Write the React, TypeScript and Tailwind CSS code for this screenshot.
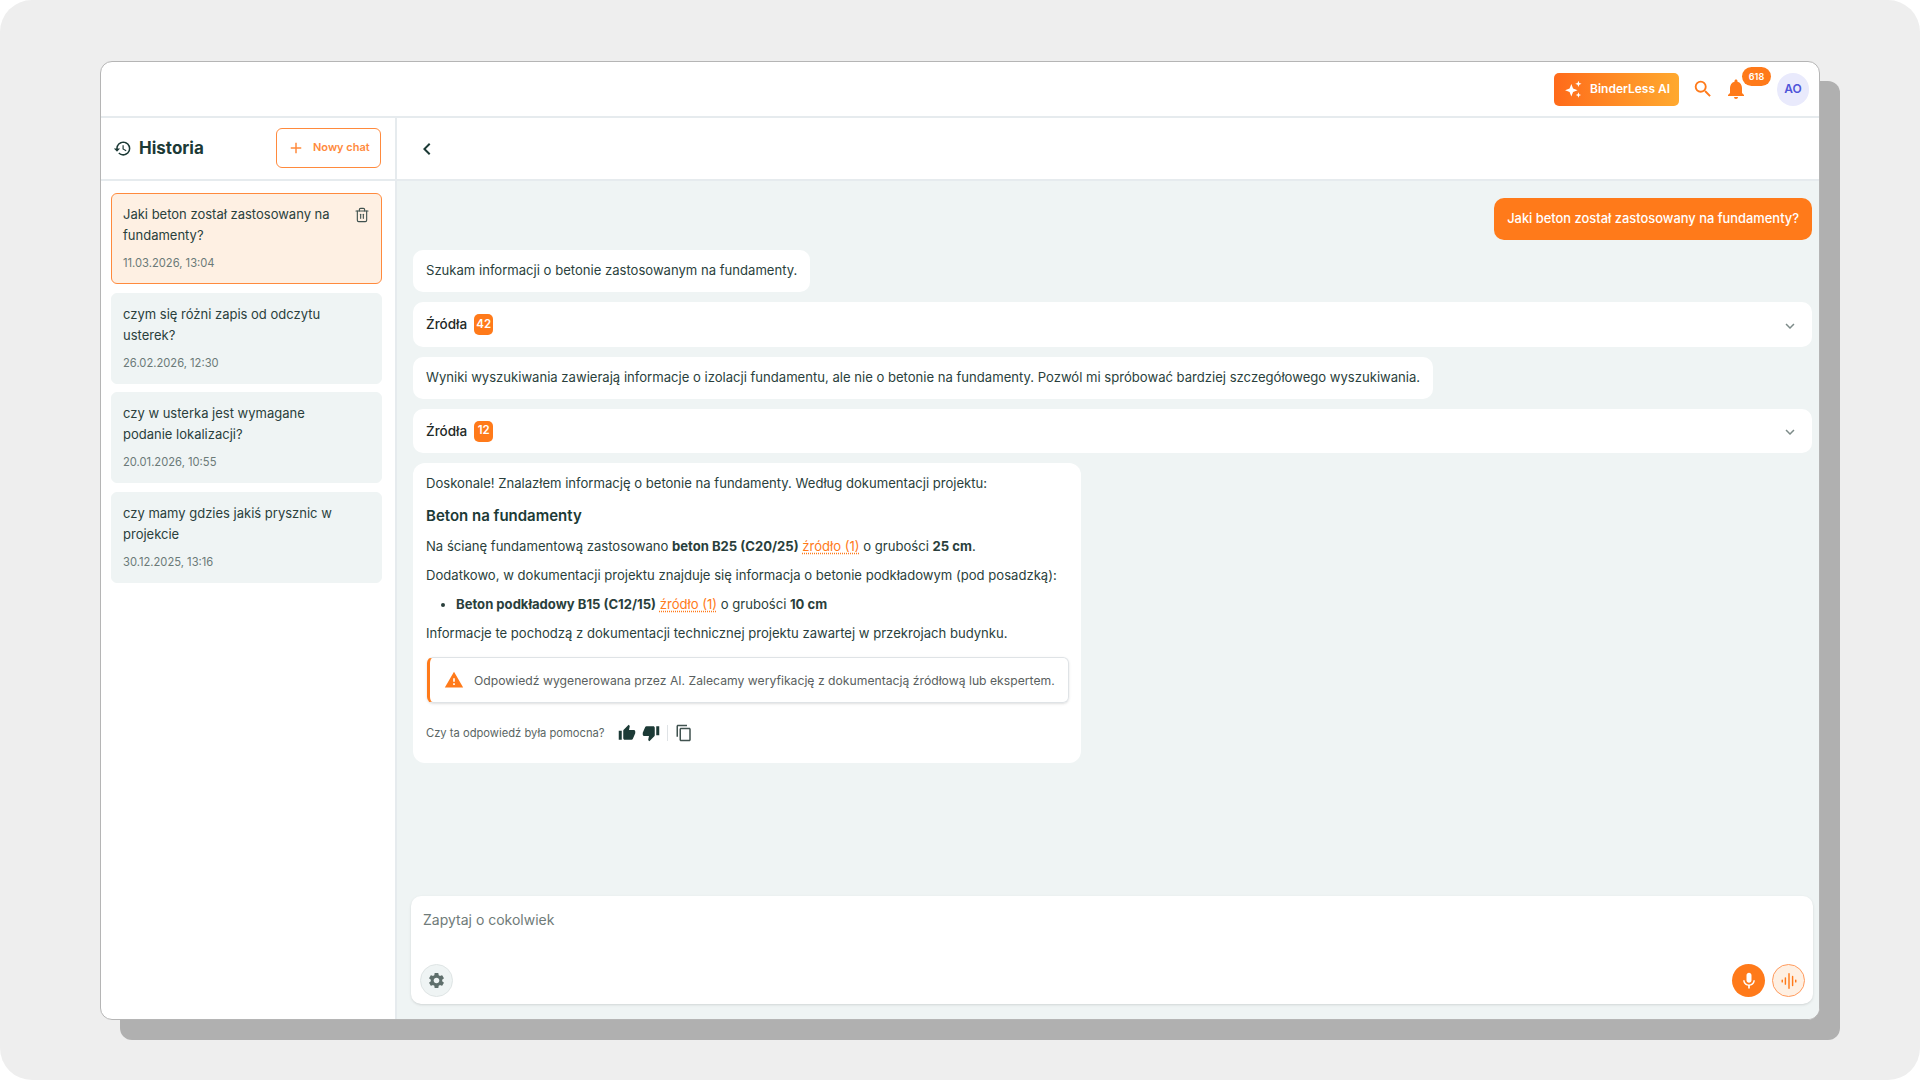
import { Trash2 } from "lucide-react";
import { MdAdd, MdChevronLeft, MdContentCopy, MdHistory, MdKeyboardArrowDown, MdMic, MdNotifications, MdSearch, MdSettings, MdThumbDown, MdThumbUp, MdWarning } from "react-icons/md";

const history = [
  { title: "Jaki beton został zastosowany na fundamenty?", date: "11.03.2026, 13:04", active: true },
  { title: "czym się różni zapis od odczytu usterek?", date: "26.02.2026, 12:30", active: false },
  { title: "czy w usterka jest wymagane podanie lokalizacji?", date: "20.01.2026, 10:55", active: false },
  { title: "czy mamy gdzies jakiś prysznic w projekcie", date: "30.12.2025, 13:16", active: false },
];

function Sparkles() {
  return (
    <svg viewBox="0 0 24 24" className="h-[20px] w-[20px] fill-white">
      <path d="M10 6l2.100 5.400 5.400 2.100-5.400 2.100L10 21l-2.100-5.400-5.400-2.100 5.400-2.100z" />
      <path d="M18.500 2l1 2.800 2.800 1-2.800 1-1 2.800-1-2.800-2.800-1 2.800-1z" />
      <path d="M18.500 16l.9 2.300 2.300.9-2.300.9-.9 2.300-.9-2.300-2.300-.9 2.300-.9z" />
    </svg>
  );
}

function Wave() {
  return (
    <svg viewBox="0 0 20 20" className="h-[18px] w-[18px] stroke-[#ff7a1a]" strokeWidth="1.6" strokeLinecap="round">
      <path d="M2.500 9v2M6 6.500v7M10 2v16M14 5v10M17.500 9v2" />
    </svg>
  );
}

function Sources({ count, height }: { count: number; height: string }) {
  return (
    <div className={`flex items-center justify-between rounded-[10px] bg-white pl-[13px] pr-[13px] ${height}`}>
      <div className="flex items-center gap-[7px]">
        <span className="text-[13.500px] font-medium text-[#1f2a28]">Źródła</span>
        <span className="flex h-[21px] w-[19px] items-center justify-center rounded-[5px] bg-[#ff7a1a] text-[11.500px] font-semibold text-white">{count}</span>
      </div>
      <MdKeyboardArrowDown className="mt-[2px] h-[18px] w-[18px] text-[#7d8b89]" />
    </div>
  );
}

function SourceLink() {
  return <span className="text-[#ff7a1a] underline decoration-dotted underline-offset-2">źródło (1)</span>;
}

export default function App() {
  return (
    <div className="min-h-screen bg-white font-['Inter',sans-serif] text-[#2a3f3c]">
      <div className="h-[1080px] rounded-[32px] bg-[#eeeeee] pl-[100px] pt-[61px]">
        <div className="flex h-[959px] w-[1720px] flex-col overflow-hidden rounded-[12px] border border-[#b5b5b5] bg-white shadow-[20px_20px_0_#b0b0b0]">
          <header className="flex h-[56px] shrink-0 items-center justify-end border-b-2 border-[#e6ebee] pr-[10px]">
            <button className="flex h-[33px] w-[125px] items-center gap-[7px] rounded-[5px] bg-gradient-to-r from-[#ff6a1a] to-[#ffa92f] pl-[9px] text-[12px] font-semibold text-white">
              <Sparkles />
              BinderLess AI
            </button>
            <MdSearch className="ml-[13px] h-[22px] w-[22px] text-[#ff7a1a]" />
            <div className="relative ml-[10px] mr-[29px]">
              <MdNotifications className="h-[24px] w-[24px] text-[#ff7a1a]" />
              <span className="absolute left-[18px] top-[-10px] flex h-[19px] w-[29px] items-center justify-center rounded-full bg-[#ff7a1a] text-[9px] font-semibold text-white">618</span>
            </div>
            <div className="flex h-[33px] w-[32px] items-center justify-center rounded-full bg-[#e9eafc] text-[12px] font-semibold text-[#4f55d9]">AO</div>
          </header>

          <div className="flex min-h-0 flex-1">
            <aside className="flex w-[296px] shrink-0 flex-col border-r-2 border-[#e6ebee]">
              <div className="flex h-[63px] shrink-0 items-center justify-between border-b-2 border-[#e6ebee] pl-[12px] pr-[14px]">
                <div className="flex items-center gap-[7px]">
                  <MdHistory className="h-[19px] w-[19px] text-[#1c3a36]" />
                  <span className="text-[17px] font-bold text-[#1c3a36]">Historia</span>
                </div>
                <button className="-mt-[2px] flex h-[40px] w-[105px] items-center gap-[8px] rounded-[6px] border border-[#ff8a3d] pl-[10px] text-[11px] font-semibold text-[#ff8a3d]">
                  <MdAdd className="h-[18px] w-[18px]" />
                  Nowy chat
                </button>
              </div>
              <div className="flex flex-col gap-[8.500px] pl-[10px] pr-[13px] pt-[12px]">
                {history.map((item) => (
                  <div
                    key={item.date}
                    className={
                      item.active
                        ? "flex h-[91px] justify-between rounded-[6px] border border-[#ff8a3d] bg-[#fef0e3] px-[11px] pt-[10px]"
                        : "flex h-[91px] justify-between rounded-[6px] border border-[#eff4f4] bg-[#eff4f4] px-[11px] pt-[10px]"
                    }
                  >
                    <div className="w-[215px]">
                      <p className="text-[13px] leading-[21px] text-[#2a3f3c]">{item.title}</p>
                      <p className="mt-[9px] text-[11.200px] leading-[16px] text-[#6b7a78]">{item.date}</p>
                    </div>
                    {item.active && <Trash2 className="mt-[3px] h-[16px] w-[16px] text-[#40524f]" strokeWidth={1.7} />}
                  </div>
                ))}
              </div>
            </aside>

            <main className="flex min-w-0 flex-1 flex-col">
              <div className="flex h-[63px] shrink-0 items-center border-b-2 border-[#e6ebee] pl-[18px]">
                <MdChevronLeft className="h-[24px] w-[24px] text-[#1c3a36]" />
              </div>
              <div className="flex min-h-0 flex-1 flex-col justify-between bg-[#eff4f4] pb-[15px] pl-[14px] pr-[6px]">
                <div className="flex flex-col gap-[10px] pl-[2px] pr-[1px] pt-[17px]">
                  <div className="flex justify-end">
                    <div className="flex h-[42px] items-center rounded-[10px] bg-[#ff7a1a] px-[13px] text-[12.900px] font-medium text-white">Jaki beton został zastosowany na fundamenty?</div>
                  </div>
                  <div className="flex">
                    <div className="flex h-[42px] items-center rounded-[10px] bg-white px-[13px] text-[13.080px]">Szukam informacji o betonie zastosowanym na fundamenty.</div>
                  </div>
                  <Sources count={42} height="h-[45px]" />
                  <div className="flex">
                    <div className="flex h-[42px] items-center rounded-[10px] bg-white px-[13px] text-[13.080px]">Wyniki wyszukiwania zawierają informacje o izolacji fundamentu, ale nie o betonie na fundamenty. Pozwól mi spróbować bardziej szczegółowego wyszukiwania.</div>
                  </div>
                  <Sources count={12} height="h-[44px]" />
                  <div className="w-[668px] rounded-[12px] bg-white pb-[14px] pl-[13px] pr-[12px] pt-[10px] text-[13.080px] leading-[21px]">
                    <p>Doskonale! Znalazłem informację o betonie na fundamenty. Według dokumentacji projektu:</p>
                    <h3 className="mt-[10px] text-[15px] font-semibold leading-[24px] text-[#1c3a36]">Beton na fundamenty</h3>
                    <p className="mt-[8px]">
                      Na ścianę fundamentową zastosowano <b className="font-bold">beton B25 (C20/25)</b> <SourceLink /> o grubości <b className="font-bold">25 cm</b>.
                    </p>
                    <p className="mt-[8px]">Dodatkowo, w dokumentacji projektu znajduje się informacja o betonie podkładowym (pod posadzką):</p>
                    <ul className="mt-[8px] list-disc pl-[30px]">
                      <li>
                        <b className="font-bold">Beton podkładowy B15 (C12/15)</b> <SourceLink /> o grubości <b className="font-bold">10 cm</b>
                      </li>
                    </ul>
                    <p className="mt-[8px]">Informacje te pochodzą z dokumentacji technicznej projektu zawartej w przekrojach budynku.</p>
                    <div className="ml-[1px] mt-[13px] flex h-[46px] items-center gap-[10px] rounded-[6px] border border-l-[3px] border-[#dfe3e6] border-l-[#ff7a1a] pl-[14px] shadow-sm">
                      <MdWarning className="h-[20px] w-[20px] shrink-0 text-[#ff7a1a]" />
                      <span className="whitespace-nowrap text-[12.200px] text-[#5a5f60]">Odpowiedź wygenerowana przez AI. Zalecamy weryfikację z dokumentacją źródłową lub ekspertem.</span>
                    </div>
                    <div className="mt-[14px] flex h-[32px] items-center">
                      <span className="mr-[13px] text-[11.200px] text-[#5a6664]">Czy ta odpowiedź była pomocna?</span>
                      <MdThumbUp className="h-[18px] w-[18px] text-[#1c3a36]" />
                      <MdThumbDown className="ml-[6px] h-[18px] w-[18px] text-[#1c3a36]" />
                      <span className="ml-[7px] h-[16px] w-px bg-[#dfe3e6]" />
                      <MdContentCopy className="ml-[7px] h-[18px] w-[18px] text-[#40524f]" />
                    </div>
                  </div>
                </div>

                <div className="flex h-[108px] flex-col justify-between rounded-[10px] bg-white pb-[7px] pl-[9px] pr-[8px] pt-[13px] shadow-sm">
                  <p className="pl-[3px] text-[14px] text-[#6f7b79]">Zapytaj o cokolwiek</p>
                  <div className="flex items-center justify-between">
                    <button className="flex h-[33px] w-[33px] items-center justify-center rounded-full border border-[#dfe5e5] bg-[#eff4f4]">
                      <MdSettings className="h-[19px] w-[19px] text-[#5f6f6c]" />
                    </button>
                    <div className="flex items-center gap-[7px]">
                      <button className="flex h-[33px] w-[33px] items-center justify-center rounded-full bg-[#ff7a1a]">
                        <MdMic className="h-[20px] w-[20px] text-white" />
                      </button>
                      <button className="flex h-[33px] w-[33px] items-center justify-center rounded-full border border-[#ff9a5c] bg-[#fef0e3]">
                        <Wave />
                      </button>
                    </div>
                  </div>
                </div>
              </div>
            </main>
          </div>
        </div>
      </div>
    </div>
  );
}
